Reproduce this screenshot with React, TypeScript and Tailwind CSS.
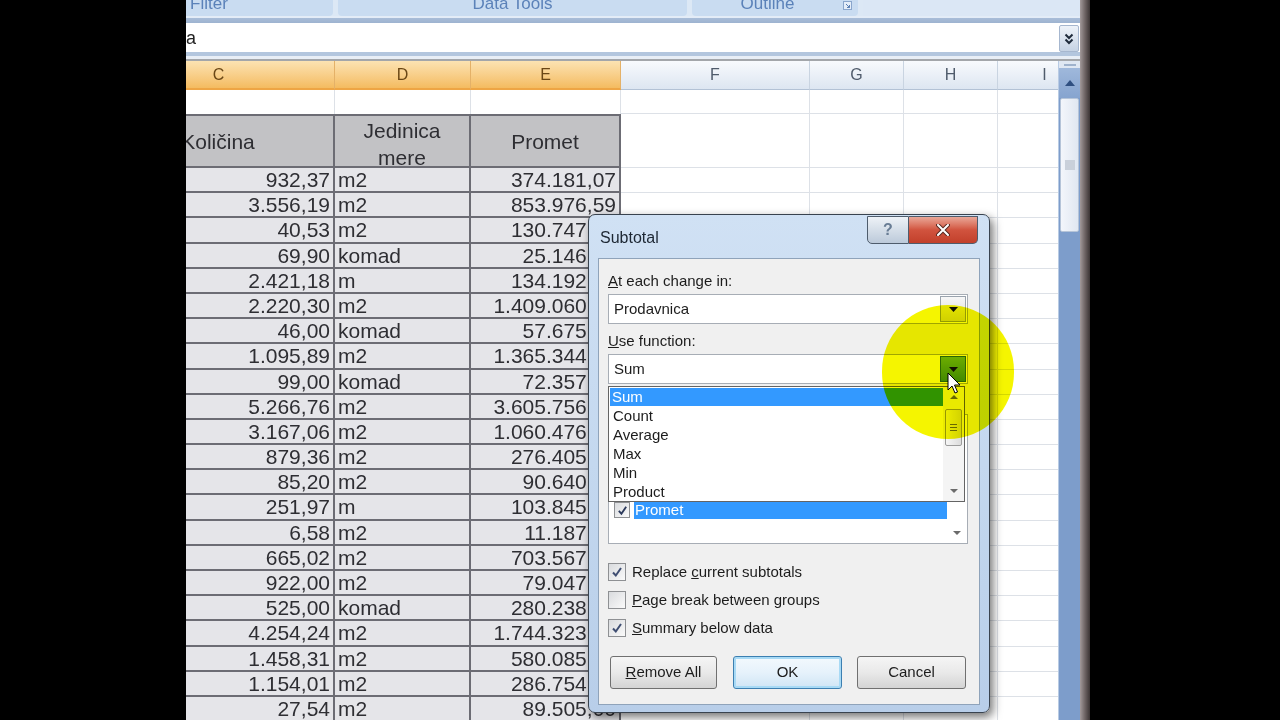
import React from 'react';

const FONT = "font-['Liberation_Sans',Arial,sans-serif]";

const rows: [string, string, string][] = [
  ['932,37', 'm2', '374.181,07'],
  ['3.556,19', 'm2', '853.976,59'],
  ['40,53', 'm2', '130.747,26'],
  ['69,90', 'komad', '25.146,05'],
  ['2.421,18', 'm', '134.192,64'],
  ['2.220,30', 'm2', '1.409.060,41'],
  ['46,00', 'komad', '57.675,00'],
  ['1.095,89', 'm2', '1.365.344,12'],
  ['99,00', 'komad', '72.357,30'],
  ['5.266,76', 'm2', '3.605.756,88'],
  ['3.167,06', 'm2', '1.060.476,37'],
  ['879,36', 'm2', '276.405,22'],
  ['85,20', 'm2', '90.640,85'],
  ['251,97', 'm', '103.845,47'],
  ['6,58', 'm2', '11.187,91'],
  ['665,02', 'm2', '703.567,43'],
  ['922,00', 'm2', '79.047,60'],
  ['525,00', 'komad', '280.238,25'],
  ['4.254,24', 'm2', '1.744.323,56'],
  ['1.458,31', 'm2', '580.085,14'],
  ['1.154,01', 'm2', '286.754,39'],
  ['27,54', 'm2', '89.505,00'],
];

const SEL_HEAD =
  'shrink-0 h-full flex items-center justify-center text-[16px] text-[#6a4716] bg-linear-to-b from-[#fce3b2] to-[#f4bb5f] border-r border-r-[#e4b168] border-b-2 border-b-[#eea544]';
const HEAD =
  'shrink-0 h-full flex items-center justify-center text-[16px] text-[#4f5b6b] bg-linear-to-b from-[#f8fafd] to-[#dde6f1] border-r border-r-[#c9d4e1] border-b border-b-[#b3c2d5]';

const GRID_CELL = 'shrink-0 h-full bg-white border-b border-r border-[#dde1e7]';
const TABLE_CELL =
  'shrink-0 h-full bg-[#e5e5e9] border-b-2 border-r-2 border-[#6c6c74] leading-[23px] text-[21px] text-[#2e2e33] whitespace-nowrap overflow-hidden';
const TABLE_HEAD =
  'shrink-0 h-full bg-[#c2c2c5] border-y-2 border-r-2 border-[#6c6c74] text-[21px] text-[#2e2e33] flex flex-col items-center justify-center text-center';

function EmptyRight() {
  return (
    <>
      <div className={`${GRID_CELL} w-[189px]`} />
      <div className={`${GRID_CELL} w-[94px]`} />
      <div className={`${GRID_CELL} w-[94px]`} />
      <div className={`${GRID_CELL} w-[94px]`} />
    </>
  );
}

function DataRow({ c, d, e }: { c: string; d: string; e: string }) {
  return (
    <div className="flex h-[25.2px] shrink-0">
      <div className={`${TABLE_CELL} w-[232px] text-right pr-[3px]`}>{c}</div>
      <div className={`${TABLE_CELL} w-[136px] text-left pl-[3px]`}>{d}</div>
      <div className={`${TABLE_CELL} w-[150px] text-right pr-[3px]`}>{e}</div>
      <EmptyRight />
    </div>
  );
}

function Sheet() {
  return (
    <div className="flex flex-col ml-[-83px]">
      {/* column letters */}
      <div className="flex h-[29px] shrink-0">
        <div className={`${SEL_HEAD} w-[232px]`}>C</div>
        <div className={`${SEL_HEAD} w-[136px]`}>D</div>
        <div className={`${SEL_HEAD} w-[150px]`}>E</div>
        <div className={`${HEAD} w-[189px]`}>F</div>
        <div className={`${HEAD} w-[94px]`}>G</div>
        <div className={`${HEAD} w-[94px]`}>H</div>
        <div className={`${HEAD} w-[94px]`}>I</div>
      </div>
      {/* blank first row */}
      <div className="flex h-[24px] shrink-0">
        <div className={`${GRID_CELL} w-[232px] border-b-0`} />
        <div className={`${GRID_CELL} w-[136px] border-b-0`} />
        <div className={`${GRID_CELL} w-[150px] border-b-0`} />
        <EmptyRight />
      </div>
      {/* table header */}
      <div className="flex h-[54px] shrink-0">
        <div className={`${TABLE_HEAD} w-[232px] pt-[2px]`}>Količina</div>
        <div className={`${TABLE_HEAD} w-[136px] leading-[27px] pt-[5px]`}>
          <span>Jedinica</span>
          <span>mere</span>
        </div>
        <div className={`${TABLE_HEAD} w-[150px] pt-[2px]`}>Promet</div>
        <EmptyRight />
      </div>
      {rows.map(([c, d, e], i) => (
        <DataRow key={i} c={c} d={d} e={e} />
      ))}
    </div>
  );
}

function Ribbon() {
  return (
    <div className="h-[23px] shrink-0 flex flex-col bg-[#dce8f5]">
      <div className="h-[16px] flex gap-[5px] ml-[-153px] overflow-hidden">
        <div className="w-[300px] shrink-0 rounded-b-[4px] bg-[#c9dcf1] text-center text-[17px] leading-[17px] text-[#5b82b9] overflow-hidden">
          <div className="mt-[-5px]">Sort &amp; Filter</div>
        </div>
        <div className="w-[349px] shrink-0 rounded-b-[4px] bg-[#c9dcf1] text-center text-[17px] leading-[17px] text-[#5b82b9] overflow-hidden">
          <div className="mt-[-5px]">Data Tools</div>
        </div>
        <div className="w-[166px] shrink-0 rounded-b-[4px] bg-[#c9dcf1] text-[17px] leading-[17px] text-[#5b82b9] overflow-hidden flex">
          <div className="flex-1 text-center mt-[-5px]">Outline</div>
          <svg width="9" height="9" viewBox="0 0 9 9" className="mt-[1px] mr-[6px]">
            <rect x="0.5" y="0.5" width="8" height="8" fill="#e4edf8" stroke="#8aa6cc" />
            <path d="M3 3 L6.5 6.5 M6.5 4 V6.5 H4" stroke="#5b7fb3" strokeWidth="1" fill="none" />
          </svg>
        </div>
        <div className="flex-1 bg-[#dbe7f5]" />
      </div>
      <div className="h-[2px] bg-[#e3ecf7]" />
      <div className="h-[5px] bg-linear-to-b from-[#a9bdd8] to-[#9db3d0]" />
    </div>
  );
}

function FormulaBar() {
  return (
    <>
      <div className="h-[29px] shrink-0 bg-white flex">
        <div className="flex-1 text-[18px] leading-[29px] text-[#222] pt-[1px]">a</div>
        <div className="w-[22px] shrink-0 flex justify-center pt-[2px]">
          <div className="w-[20px] h-[27px] bg-linear-to-b from-[#eef3f9] to-[#c6d3e4] border border-[#a6b7cf] rounded-[2px] flex items-center justify-center">
            <svg width="10" height="12" viewBox="0 0 10 12">
              <path d="M1.5 1.5 L5 5 L8.5 1.5 M1.5 6.5 L5 10 L8.5 6.5" stroke="#1f2b3b" strokeWidth="2" fill="none" />
            </svg>
          </div>
        </div>
      </div>
      <div className="h-[4px] shrink-0 bg-[#b3c6de]" />
      <div className="h-[3px] shrink-0 bg-[#e8eef6]" />
      <div className="h-[2px] shrink-0 bg-[#a3a6aa]" />
    </>
  );
}

function VScroll() {
  return (
    <div className="w-[22px] shrink-0 flex flex-col bg-[#7d9dcb] border-l border-[#b8cbe4]">
      <div className="h-[7px] shrink-0 bg-[#dfe7f2] flex items-center justify-center">
        <div className="w-[12px] h-[2px] bg-[#9fb2cc]" />
      </div>
      <div className="h-[30px] shrink-0 bg-linear-to-b from-[#9fb8db] to-[#86a4cf] flex items-center justify-center">
        <svg width="10" height="6" viewBox="0 0 10 6">
          <path d="M0 6 L5 0 L10 6 Z" fill="#2f4f80" />
        </svg>
      </div>
      <div className="h-[134px] shrink-0 mx-[1px] bg-linear-to-r from-[#f3f6fb] to-[#e0e7f1] border border-[#b5c4d8] rounded-[2px] flex items-center justify-center">
        <div className="w-[10px] h-[10px] bg-[#c9d0da]" />
      </div>
      <div className="flex-1" />
    </div>
  );
}

function CheckBox({ checked }: { checked: boolean }) {
  return (
    <div className="w-[18px] h-[18px] shrink-0 border border-[#8e9093] bg-linear-to-br from-[#d9dbde] to-[#fafafa] flex items-center justify-center">
      {checked && (
        <svg width="12" height="12" viewBox="0 0 12 12">
          <path d="M2 6.5 L4.8 9.5 L10 2" stroke="#3f4e72" strokeWidth="2" fill="none" />
        </svg>
      )}
    </div>
  );
}

function Combo({ text, hot }: { text: string; hot?: boolean }) {
  return (
    <div className="h-[30px] border border-[#a7adb5] bg-white flex items-center pl-[5px] pr-[1px]">
      <span className="flex-1 text-[15px] text-[#1c1c1c]">{text}</span>
      <div
        className={
          hot
            ? 'w-[26px] h-[26px] border border-[#2b6aa5] bg-linear-to-b from-[#70b4f2] to-[#4690dc] flex items-center justify-center'
            : 'w-[26px] h-[26px] border border-[#9aa3ad] bg-linear-to-b from-[#f7f7f7] to-[#dadada] flex items-center justify-center'
        }
      >
        <svg width="9" height="5" viewBox="0 0 9 5">
          <path d="M0 0 H9 L4.5 5 Z" fill="#111" />
        </svg>
      </div>
    </div>
  );
}

const BTN =
  'h-[33px] shrink-0 rounded-[3px] border border-[#707070] bg-linear-to-b from-[#f5f5f5] via-[#e9e9e9] to-[#d4d4d4] text-[15px] text-[#1c1c1c] flex items-center justify-center';

function Dialog() {
  const items = ['Count', 'Average', 'Max', 'Min', 'Product'];
  return (
    <div className={`absolute left-[588px] top-[214px] w-[402px] h-[499px] rounded-[7px] border border-[#39434f] bg-linear-to-b from-[#d0e1f4] via-[#c4d8ef] to-[#b8cee9] shadow-[3px_4px_10px_rgba(0,0,0,0.55)] flex flex-col ${FONT}`}>
      <div className="h-[43px] shrink-0 flex">
        <div className="flex-1 pl-[11px] pt-[11px] text-[16px] text-[#1d2733]">Subtotal</div>
        <div className="flex mr-[11px] mt-[1px] h-[28px]">
          <div className="w-[42px] border border-[#4e5c6c] rounded-bl-[5px] bg-linear-to-b from-[#eef2f7] to-[#bccada] flex items-center justify-center text-[#687c94] font-bold text-[16px]">
            ?
          </div>
          <div className="w-[69px] border border-l-0 border-[#4e5c6c] rounded-br-[5px] bg-linear-to-b from-[#e9a798] via-[#d1533e] to-[#c2402b] flex items-center justify-center">
            <svg width="14" height="12" viewBox="0 0 14 12">
              <path d="M2 1 L12 11 M12 1 L2 11" stroke="#5a2a22" strokeWidth="4" strokeLinecap="round" />
              <path d="M2 1 L12 11 M12 1 L2 11" stroke="#ffffff" strokeWidth="2" strokeLinecap="round" />
            </svg>
          </div>
        </div>
      </div>
      <div className="mx-[9px] h-[447px] shrink-0 bg-[#f0f0f0] border border-[#8fa3ba] relative flex flex-col pl-[9px] pr-[11px] text-[15px] text-[#1c1c1c]">
        <div className="mt-[14px] h-[16px] leading-[16px]">
          <span className="underline">A</span>t each change in:
        </div>
        <div className="mt-[5px]">
          <Combo text="Prodavnica" />
        </div>
        <div className="mt-[9px] h-[16px] leading-[16px]">
          <span className="underline">U</span>se function:
        </div>
        <div className="mt-[5px]">
          <Combo text="Sum" hot />
        </div>
        <div className="mt-[9px] h-[16px] leading-[16px]">Add subtotal to:</div>
        <div className="mt-[5px] h-[130px] border border-[#a7adb5] bg-white flex">
          <div className="flex-1 flex flex-col justify-end pb-[24px] pl-[5px]">
            {['Datum', 'Artikal', 'Količina', 'Jedinica mere'].map((t) => (
              <div key={t} className="h-[18px] flex items-center gap-[4px]">
                <CheckBox checked={false} />
                <span>{t}</span>
              </div>
            ))}
            <div className="h-[18px] flex items-center gap-[4px]">
              <div className="w-[16px] h-[16px] border border-[#8e9093] bg-linear-to-br from-[#d9dbde] to-[#fafafa] flex items-center justify-center">
                <svg width="11" height="11" viewBox="0 0 12 12">
                  <path d="M2 6.5 L4.8 9.5 L10 2" stroke="#2c3a5c" strokeWidth="2" fill="none" />
                </svg>
              </div>
              <span className="flex-1 bg-[#3399ff] text-white leading-[18px] pl-[1px]">Promet</span>
            </div>
          </div>
          <div className="w-[20px] shrink-0 flex flex-col justify-end items-center pb-[8px]">
            <svg width="8" height="4" viewBox="0 0 8 4">
              <path d="M0 0 H8 L4 4 Z" fill="#6b6b6b" />
            </svg>
          </div>
        </div>
        <div className="mt-[18px] h-[20px] flex items-center gap-[6px]">
          <CheckBox checked />
          <span>
            Replace <span className="underline">c</span>urrent subtotals
          </span>
        </div>
        <div className="mt-[8px] h-[20px] flex items-center gap-[6px]">
          <CheckBox checked={false} />
          <span>
            <span className="underline">P</span>age break between groups
          </span>
        </div>
        <div className="mt-[8px] h-[20px] flex items-center gap-[6px]">
          <CheckBox checked />
          <span>
            <span className="underline">S</span>ummary below data
          </span>
        </div>
        <div className="mt-[18px] flex pl-[2px] gap-[16px]">
          <div className={`${BTN} w-[107px]`}>
            <span>
              <span className="underline">R</span>emove All
            </span>
          </div>
          <div className="h-[33px] w-[109px] shrink-0 rounded-[3px] border border-[#3c7fb1] shadow-[inset_0_0_0_2px_#a8daf5] bg-linear-to-b from-[#f3f9fd] via-[#e6f2fb] to-[#cfe5f5] text-[15px] flex items-center justify-center">
            OK
          </div>
          <div className={`${BTN} w-[109px] ml-[-1px]`}>Cancel</div>
        </div>

        {/* open dropdown list */}
        <div className="absolute left-[9px] top-[127px] w-[357px] h-[116px] border border-[#646464] bg-white flex">
          <div className="flex-1 flex flex-col pt-[1px] pl-[1px]">
            <div className="h-[18px] bg-[#3399ff] text-white leading-[18px] pl-[2px]">Sum</div>
            {items.map((t) => (
              <div key={t} className="h-[19.2px] leading-[19px] pl-[3px]">
                {t}
              </div>
            ))}
          </div>
          <div className="w-[21px] shrink-0 flex flex-col items-center bg-[#f4f4f4]">
            <div className="h-[20px] w-full flex items-center justify-center">
              <svg width="8" height="4" viewBox="0 0 8 4">
                <path d="M0 4 H8 L4 0 Z" fill="#6b6b6b" />
              </svg>
            </div>
            <div className="mt-[2px] w-[17px] h-[37px] border border-[#9c9c9c] rounded-[2px] bg-linear-to-r from-[#f6f6f6] to-[#dcdcdc] flex flex-col items-center justify-center gap-[2px]">
              <div className="w-[7px] h-[1px] bg-[#6c6c6c]" />
              <div className="w-[7px] h-[1px] bg-[#6c6c6c]" />
              <div className="w-[7px] h-[1px] bg-[#6c6c6c]" />
            </div>
            <div className="flex-1" />
            <div className="h-[20px] w-full flex items-center justify-center">
              <svg width="8" height="4" viewBox="0 0 8 4">
                <path d="M0 0 H8 L4 4 Z" fill="#6b6b6b" />
              </svg>
            </div>
          </div>
        </div>
      </div>
    </div>
  );
}

export default function App() {
  return (
    <div className={`w-[1280px] h-[720px] bg-black flex overflow-hidden relative ${FONT}`}>
      <div className="w-[186px] shrink-0" />
      <div className="w-[894px] shrink-0 h-full flex flex-col bg-white overflow-hidden">
        <Ribbon />
        <FormulaBar />
        <div className="flex flex-1 min-h-0">
          <div className="w-[872px] shrink-0 overflow-hidden">
            <Sheet />
          </div>
          <VScroll />
        </div>
      </div>
      <div className="w-[10px] shrink-0 h-full bg-linear-to-r from-[#a39a9b] via-[#6e6464] to-[#3b3434]" />

      <Dialog />

      {/* highlight spotlight */}
      <div className="absolute left-[882px] top-[305px] w-[132px] h-[134px] rounded-full bg-[radial-gradient(circle,#f5f500_0%,#f5f500_82%,rgba(245,245,0,0)_100%)] mix-blend-multiply pointer-events-none" />

      {/* mouse pointer */}
      <svg className="absolute left-[947px] top-[372px]" width="14" height="23" viewBox="0 0 14 23">
        <path d="M1 1 L1 18 L5 14 L8 21 L10.5 20 L7.5 13 L13 13 Z" fill="#ffffff" stroke="#000" strokeWidth="1" strokeLinejoin="round" />
      </svg>
    </div>
  );
}
